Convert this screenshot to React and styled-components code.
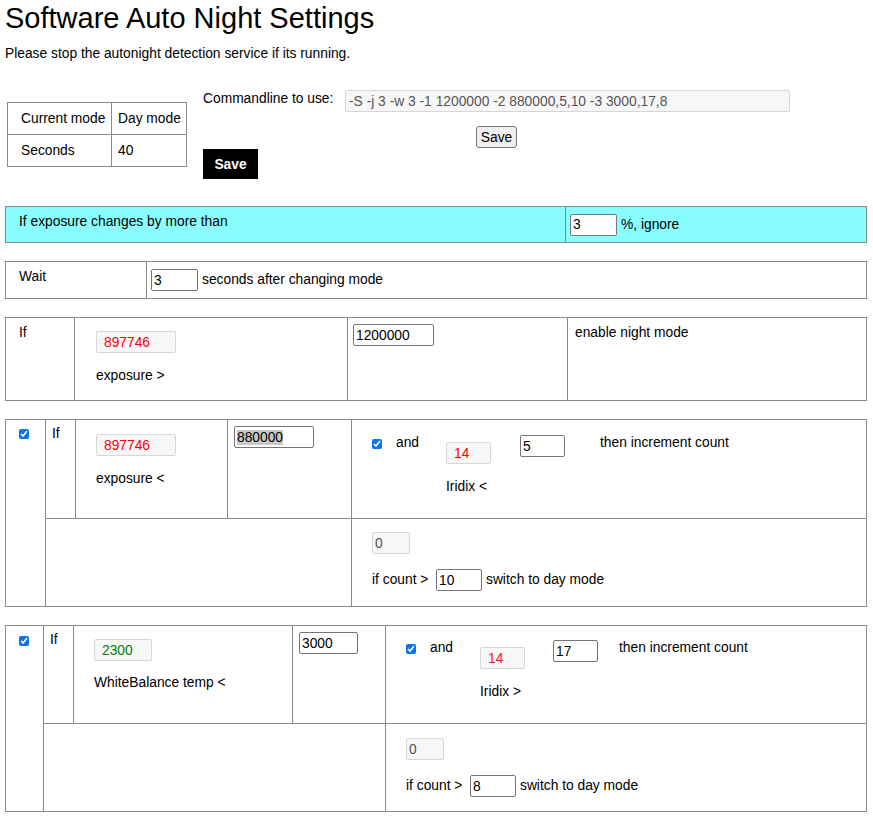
import React, { useEffect, useRef } from 'react';
import styled, { createGlobalStyle } from 'styled-components';

const GlobalStyle = createGlobalStyle`
  body {
    margin: 0;
    background: #ffffff;
    color: #000000;
    font-family: "Liberation Sans", Arial, sans-serif;
    font-size: 13.8px;
  }
`;

const Page = styled.div`
  width: 862px;
  padding: 0 6px 8px 5px;
`;

const Title = styled.h1`
  margin: 2px 0 0;
  font-size: 29px;
  font-weight: 400;
  line-height: 32px;
`;

const Notice = styled.p`
  margin: 12px 0 0;
  line-height: 16px;
`;

const TopSection = styled.div`
  display: flex;
  align-items: center;
  gap: 16px;
  margin-top: 28px;
  padding-left: 2px;
`;

// collapsed-border look: gray background shows through 1px gaps
const Grid = styled.div`
  display: grid;
  grid-template-columns: ${(p) => p.$cols};
  grid-template-rows: ${(p) => p.$rows || 'auto'};
  gap: 1px;
  background: #8a8a8a;
  border: 1px solid #8a8a8a;
  margin-top: ${(p) => p.$mt ?? 18}px;
`;

const Cell = styled.div`
  background: ${(p) => (p.$bg ? p.$bg : '#ffffff')};
  padding: ${(p) => p.$pad || '7px 13px'};
  line-height: 16px;
  display: flex;
  flex-direction: ${(p) => (p.$row ? 'row' : 'column')};
  align-items: ${(p) => (p.$row ? 'center' : 'flex-start')};
  gap: ${(p) => p.$gap || 0}px;
  grid-row: ${(p) => p.$span || 'auto'};
  grid-column: ${(p) => p.$colspan || 'auto'};
`;

const InfoCell = styled.div`
  background: #ffffff;
  display: flex;
  align-items: center;
  padding-left: ${(p) => p.$pl}px;
`;

const CommandArea = styled.div`
  width: 587px;
  display: flex;
  flex-direction: column;
`;

const CommandRow = styled.div`
  display: flex;
  align-items: flex-start;
`;

const CommandLabel = styled.span`
  width: 142px;
  line-height: 16px;
  padding-top: 1px;
`;

const Field = styled.input`
  box-sizing: border-box;
  width: ${(p) => p.$w}px;
  height: 22px;
  padding: 1px ${(p) => p.$px ?? 2}px;
  border: 1px solid ${(p) => (p.readOnly ? '#d6d6d6' : '#767676')};
  border-radius: 2px;
  background: ${(p) => (p.readOnly ? '#f7f7f7' : '#ffffff')};
  color: ${(p) => p.$color || '#000000'};
  font-family: inherit;
  font-size: 13.8px;
  outline: none;

  &::selection {
    background: #c8c8c8;
    color: #000000;
  }
`;

const GrayButton = styled.button`
  align-self: center;
  margin-top: 14px;
  width: 41px;
  height: 22px;
  padding: 0;
  background: #efefef;
  border: 1px solid #767676;
  border-radius: 3px;
  color: #000000;
  font-family: inherit;
  font-size: 13.8px;
`;

const BlackButton = styled.button`
  align-self: flex-start;
  margin-top: 1px;
  width: 55px;
  height: 30px;
  padding: 0;
  background: #000000;
  border: none;
  color: #ffffff;
  font-family: inherit;
  font-size: 13.8px;
  font-weight: 700;
`;

const Check = styled.input.attrs({ type: 'checkbox', defaultChecked: true })`
  width: 10px;
  height: 10px;
  margin: ${(p) => p.$mt || 0}px 0 0;
  accent-color: #0b74f0;
`;

const Label = styled.span`
  margin-top: ${(p) => p.$mt || 0}px;
  line-height: 16px;
  white-space: nowrap;
`;

const AndRow = styled.div`
  display: grid;
  grid-template-columns: ${(p) => p.$cols};
  align-items: start;
`;

const AndGroup = styled.div`
  display: flex;
  align-items: flex-start;
  gap: 14px;
`;

const Stack = styled.div`
  display: flex;
  flex-direction: column;
  align-items: flex-start;
  padding-top: ${(p) => p.$pt || 0}px;
`;

const CountLine = styled.div`
  display: flex;
  align-items: center;
  margin-top: 15px;
  gap: 4px;
`;

const CountLabel = styled.span`
  width: 60px;
  line-height: 16px;
`;

function AndCell({ cols, top, label, value, color, limit }) {
  return (
    <Cell $pad={`${top}px 0 0 20px`}>
      <AndRow $cols={cols}>
        <AndGroup>
          <Check $mt={4} />
          <Label>and</Label>
        </AndGroup>
        <Stack $pt={7}>
          <Field readOnly $w={45} $px={7} $color={color} defaultValue={value} />
          <Label $mt={15}>{label}</Label>
        </Stack>
        <Field $w={45} defaultValue={limit} />
        <Label>then increment count</Label>
      </AndRow>
    </Cell>
  );
}

function CountCell({ top, limit }) {
  return (
    <Cell $pad={`${top}px 0 0 20px`}>
      <Field readOnly $w={38} $color="#5a4a44" defaultValue="0" />
      <CountLine>
        <CountLabel>if count &gt;</CountLabel>
        <Field $w={46} defaultValue={limit} />
        <Label>switch to day mode</Label>
      </CountLine>
    </Cell>
  );
}

export default function App() {
  // the reference shows the night threshold value selected
  const selectedRef = useRef(null);
  useEffect(() => {
    if (selectedRef.current) {
      selectedRef.current.focus();
      selectedRef.current.select();
    }
  }, []);

  return (
    <Page>
      <GlobalStyle />
      <Title>Software Auto Night Settings</Title>
      <Notice>Please stop the autonight detection service if its running.</Notice>

      <TopSection>
        <Grid $cols="103px 74px" $rows="31px 31px" $mt={0}>
          <InfoCell $pl={13}>Current mode</InfoCell>
          <InfoCell $pl={6}>Day mode</InfoCell>
          <InfoCell $pl={13}>Seconds</InfoCell>
          <InfoCell $pl={6}>40</InfoCell>
        </Grid>
        <CommandArea>
          <CommandRow>
            <CommandLabel>Commandline to use:</CommandLabel>
            <Field
              readOnly
              $w={445}
              $px={3}
              $color="#555555"
              defaultValue="-S -j 3 -w 3 -1 1200000 -2 880000,5,10 -3 3000,17,8"
            />
          </CommandRow>
          <GrayButton>Save</GrayButton>
          <BlackButton>Save</BlackButton>
        </CommandArea>
      </TopSection>

      <Grid $cols="559px 300px" $rows="35px" $mt={27}>
        <Cell $bg="#8afefe">If exposure changes by more than</Cell>
        <Cell $bg="#8afefe" $row $gap={4} $pad="0 0 0 4px">
          <Field $w={47} defaultValue="3" />
          <span>%, ignore</span>
        </Cell>
      </Grid>

      <Grid $cols="140px 719px" $rows="36px">
        <Cell>Wait</Cell>
        <Cell $row $gap={4} $pad="0 0 0 4px">
          <Field $w={47} defaultValue="3" />
          <span>seconds after changing mode</span>
        </Cell>
      </Grid>

      <Grid $cols="68px 272px 219px 298px" $rows="82px">
        <Cell>If</Cell>
        <Cell $pad="13px 0 0 21px">
          <Field readOnly $w={80} $px={7} $color="#ff0000" defaultValue="897746" />
          <Label $mt={15}>exposure &gt;</Label>
        </Cell>
        <Cell $pad="6px 0 0 5px">
          <Field $w={81} defaultValue="1200000" />
        </Cell>
        <Cell $pad="7px 7px">enable night mode</Cell>
      </Grid>

      <Grid $cols="39px 29px 151px 123px 514px" $rows="98px 87px">
        <Cell $span="1 / 3" $pad="9px 0 0 13px">
          <Check />
        </Cell>
        <Cell $pad="6px 0 0 6px">If</Cell>
        <Cell $pad="14px 0 0 20px">
          <Field readOnly $w={80} $px={7} $color="#ff0000" defaultValue="897746" />
          <Label $mt={15}>exposure &lt;</Label>
        </Cell>
        <Cell $pad="6px 0 0 6px">
          <Field ref={selectedRef} $w={80} defaultValue="880000" />
        </Cell>
        <AndCell cols="74px 74px 80px auto" top={15} label="Iridix <" value="14" color="#ff0000" limit="5" />
        <Cell $colspan="2 / 5" />
        <CountCell top={13} limit="10" />
      </Grid>

      <Grid $cols="37px 29px 218px 92px 480px" $rows="97px 87px">
        <Cell $span="1 / 3" $pad="10px 0 0 13px">
          <Check />
        </Cell>
        <Cell $pad="6px 0 0 6px">If</Cell>
        <Cell $pad="13px 0 0 20px">
          <Field readOnly $w={58} $px={7} $color="#008000" defaultValue="2300" />
          <Label $mt={14}>WhiteBalance temp &lt;</Label>
        </Cell>
        <Cell $pad="6px 0 0 6px">
          <Field $w={59} defaultValue="3000" />
        </Cell>
        <AndCell cols="74px 73px 66px auto" top={14} label="Iridix >" value="14" color="#ff0a3c" limit="17" />
        <Cell $colspan="2 / 5" />
        <CountCell top={14} limit="8" />
      </Grid>
    </Page>
  );
}
